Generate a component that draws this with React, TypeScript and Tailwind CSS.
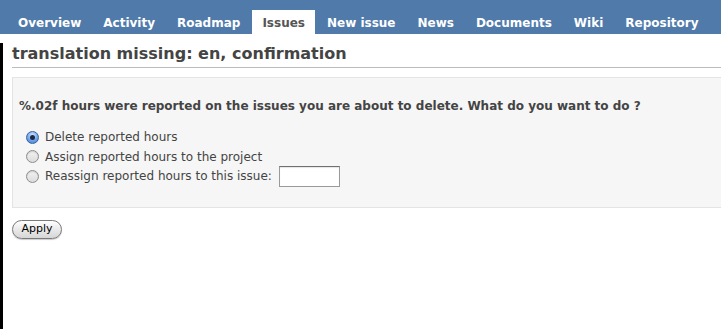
import React from "react";

const tabs = ["Overview", "Activity", "Roadmap", "Issues", "New issue", "News", "Documents", "Wiki", "Repository"];

function Radio({ checked }: { checked?: boolean }) {
  if (checked) {
    return (
      <span className="flex h-[13px] w-[13px] items-center justify-center rounded-full border border-[#3a5f9e] bg-[radial-gradient(circle_at_50%_30%,#d6e8ff,#6fa5ec_55%,#3f7bd4)] shrink-0">
        <span className="h-[5px] w-[5px] rounded-full bg-[#1b2a44]" />
      </span>
    );
  }
  return (
    <span className="h-[13px] w-[13px] rounded-full border border-[#8d8d8d] bg-[linear-gradient(#f2f2f2,#dcdcdc)] shadow-[inset_0_1px_1px_rgba(0,0,0,0.15)] shrink-0" />
  );
}

export default function App() {
  return (
    <div className="h-[329px] w-[721px] overflow-hidden bg-white" style={{ fontFamily: '"DejaVu Sans", Verdana, sans-serif' }}>
      <div className="flex h-[34px] items-end bg-[#507aaa] pl-[8px]">
        <div className="flex gap-[2px]">
          {tabs.map((t) => (
            <div
              key={t}
              className={
                "flex h-[24px] items-center px-[10px] pt-[2px] text-[12px] font-bold whitespace-nowrap " +
                (t === "Issues" ? "bg-white text-[#555]" : "text-white")
              }
            >
              {t}
            </div>
          ))}
        </div>
      </div>
      <div className="h-[295px] border-l-[3px] border-black pl-[9px]">
        <h2 className="mt-[9px] border-b border-[#bbb] pb-[2px] text-[16px] font-bold leading-[22px] text-[#444]">
          translation missing: en, confirmation
        </h2>
        <div className="mt-[9px] h-[131px] border border-r-0 border-[#e4e4e4] bg-[#f6f6f6] pl-[6px] pt-[20px] text-[12px] text-[#444]">
          <p className="font-bold leading-[16px]">
            %.02f hours were reported on the issues you are about to delete. What do you want to do ?
          </p>
          <div className="mt-[13px] flex flex-col pl-[7px]">
            <label className="flex h-[20px] items-center gap-[6px]">
              <Radio checked />
              <span>Delete reported hours</span>
            </label>
            <label className="flex h-[19px] items-center gap-[6px]">
              <Radio />
              <span>Assign reported hours to the project</span>
            </label>
            <label className="flex h-[20px] items-center gap-[6px]">
              <Radio />
              <span>Reassign reported hours to this issue:</span>
              <span className="ml-[1px] h-[21px] w-[61px] shrink-0 border border-[#9a9a9a] border-t-[#6f6f6f] bg-white shadow-[inset_0_1px_1px_rgba(0,0,0,0.1)]" />
            </label>
          </div>
        </div>
        <button className="mt-[12px] flex h-[19px] w-[50px] items-center justify-center rounded-full border border-[#7a7a7a] bg-[linear-gradient(#ffffff,#e9e9e9_50%,#d6d6d6)] text-[11px] text-black shadow-[0_1px_1px_rgba(0,0,0,0.2)]">
          Apply
        </button>
      </div>
    </div>
  );
}
